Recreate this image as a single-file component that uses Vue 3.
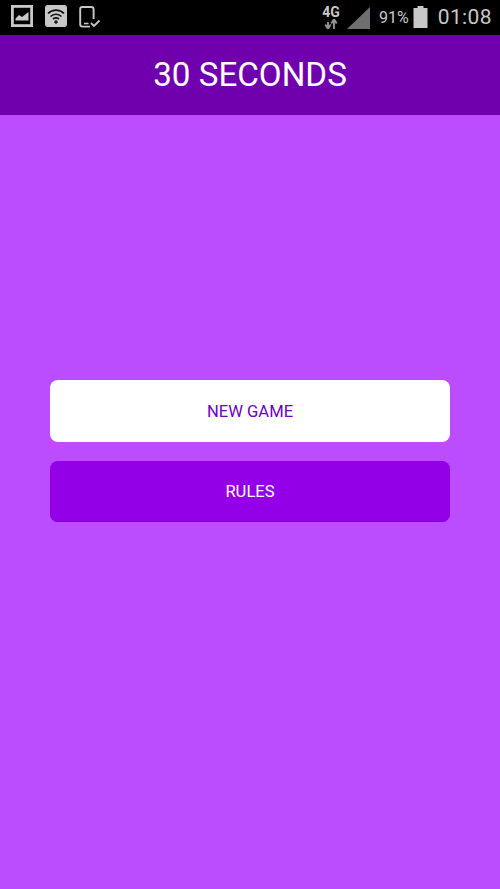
<script setup>
</script>

<template>
  <div class="screen">
    <div class="status">
      <div class="status-left">
        <svg class="ic" width="22" height="22" viewBox="0 0 22 22">
          <rect x="1.4" y="1.4" width="19.2" height="19.2" fill="none" stroke="#c8c8c8" stroke-width="2.8" />
          <path d="M4.5 15.5 L4.5 13.5 L8 10 L11 12 L17.5 7 L17.5 15.5 Z" fill="#c8c8c8" />
        </svg>
        <svg class="ic" width="22" height="22" viewBox="0 0 22 22">
          <rect x="0" y="0" width="22" height="22" rx="3" fill="#c8c8c8" />
          <path d="M3 8.5 C7.5 4 14.5 4 19 8.5 M5.5 11.5 C8.5 8.5 13.5 8.5 16.5 11.5 M8 14 C9.7 12.6 12.3 12.6 14 14" fill="none" stroke="#111" stroke-width="1.7" />
          <circle cx="11" cy="17" r="1.7" fill="#111" />
        </svg>
        <svg class="ic phone" width="22" height="22" viewBox="0 0 22 22">
          <path d="M11 20.6 H3.5 Q1.2 20.6 1.2 18.5 V3 Q1.2 1 3.2 1 H12 Q14.6 1 14.6 3 V13" fill="none" stroke="#c8c8c8" stroke-width="1.9" />
          <path d="M5 17.5 H9.5" stroke="#c8c8c8" stroke-width="1.6" />
          <path d="M12 17 L15 20 L20.5 14.5" fill="none" stroke="#c8c8c8" stroke-width="1.8" />
        </svg>
      </div>
      <div class="status-right">
        <div class="net">
          <span class="net-label">4G</span>
          <svg width="14" height="10" viewBox="0 0 14 10">
            <path d="M4 10 V3 M1.3 5.5 L4 10 L6.7 5.5 M10 0 V10 M7.3 4.5 L10 0 L12.7 4.5" fill="none" stroke="#8f8f8f" stroke-width="1.9" />
          </svg>
        </div>
        <svg class="signal" width="23" height="22" viewBox="0 0 23 22">
          <path d="M0 22 L23 0 V22 Z" fill="#6f6f6f" />
        </svg>
        <span class="pct">91%</span>
        <svg class="battery" width="15" height="22" viewBox="0 0 15 22">
          <rect x="4.5" y="0" width="6" height="3" fill="#c8c8c8" />
          <rect x="0.5" y="2" width="14" height="20" fill="#c8c8c8" />
        </svg>
        <span class="time">01:08</span>
      </div>
    </div>
    <header class="bar">
      <h1 class="title">30 SECONDS</h1>
    </header>
    <main class="menu">
      <button class="btn btn-light" type="button">NEW GAME</button>
      <button class="btn btn-dark" type="button">RULES</button>
    </main>
  </div>
</template>

<style>
html, body {
  margin: 0;
  padding: 0;
  background: #bb4dff;
}
</style>

<style scoped>
.screen {
  width: 500px;
  height: 889px;
  display: flex;
  flex-direction: column;
  background: #bb4dff;
  font-family: Roboto, "Liberation Sans", sans-serif;
  overflow: hidden;
}
.status {
  height: 35px;
  flex: none;
  box-sizing: border-box;
  background: #000;
  display: flex;
  align-items: flex-start;
  justify-content: space-between;
  padding: 5px 8px 0 11px;
}
.status-left {
  display: flex;
  align-items: flex-start;
  gap: 12px;
}
.phone {
  margin-top: 1px;
}
.status-right {
  display: flex;
  align-items: center;
  height: 24px;
}
.net {
  display: flex;
  flex-direction: column;
  align-items: center;
  width: 20px;
  margin-right: 6px;
}
.net-label {
  font-size: 14px;
  font-weight: 700;
  line-height: 13px;
  color: #c8c8c8;
}
.signal {
  margin-right: 9px;
  margin-top: 1px;
}
.pct {
  font-size: 16px;
  color: #c8c8c8;
  margin-right: 4px;
}
.battery {
  margin-right: 10px;
}
.time {
  font-size: 21px;
  color: #c8c8c8;
  letter-spacing: 0.4px;
}
.bar {
  height: 80px;
  flex: none;
  box-sizing: border-box;
  padding-bottom: 2px;
  background: #7000ae;
  display: flex;
  align-items: center;
  justify-content: center;
}
.title {
  margin: 0;
  font-size: 33.2px;
  font-weight: 400;
  color: #fff;
}
.menu {
  display: flex;
  flex-direction: column;
  gap: 19px;
  padding: 265.3px 50px 0;
}
.btn {
  height: 61.5px;
  border: none;
  border-radius: 8px;
  font-family: inherit;
  font-size: 16.6px;
  padding: 0;
}
.btn-light {
  background: #fff;
  color: #7000c4;
}
.btn-dark {
  background: #9300e8;
  color: #fff;
  box-shadow: inset 0 -1px 0 #8a00d8;
}
</style>
